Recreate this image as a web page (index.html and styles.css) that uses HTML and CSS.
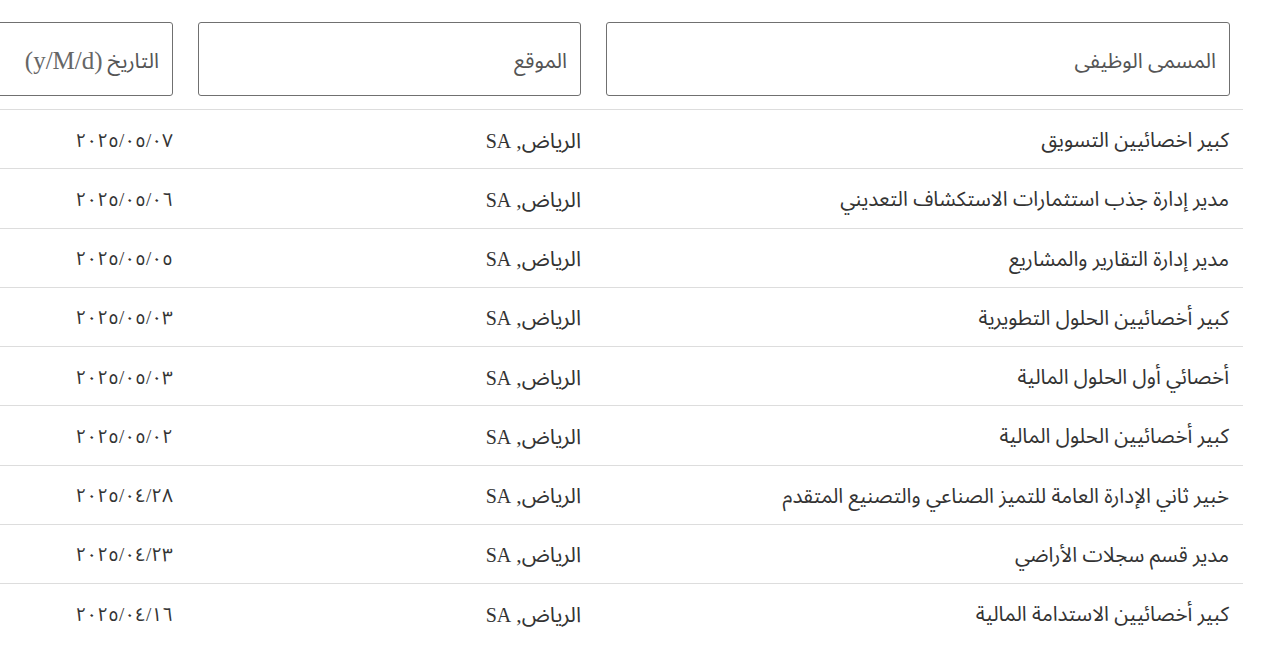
FILE: index.html
```html
<!DOCTYPE html>
<html lang="ar" dir="rtl">
<head>
<meta charset="utf-8">
<link rel="stylesheet" href="styles.css">
</head>
<body>
<div class="wrap">
<table class="jobs">
<colgroup>
<col class="w-title">
<col class="w-loc">
<col class="w-date">
</colgroup>
<thead>
<tr>
<th><div class="filter">المسمى الوظيفى</div></th>
<th><div class="filter">الموقع</div></th>
<th><div class="filter">التاريخ <span class="fmt">(y/M/d)</span></div></th>
</tr>
</thead>
<tbody>
<tr><td class="t">كبير اخصائيين التسويق</td><td class="l"><span class="city">الرياض,</span> SA</td><td class="d">٢٠٢٥/٠٥/٠٧</td></tr>
<tr><td class="t">مدير إدارة جذب استثمارات الاستكشاف التعديني</td><td class="l"><span class="city">الرياض,</span> SA</td><td class="d">٢٠٢٥/٠٥/٠٦</td></tr>
<tr><td class="t">مدير إدارة التقارير والمشاريع</td><td class="l"><span class="city">الرياض,</span> SA</td><td class="d">٢٠٢٥/٠٥/٠٥</td></tr>
<tr><td class="t">كبير أخصائيين الحلول التطويرية</td><td class="l"><span class="city">الرياض,</span> SA</td><td class="d">٢٠٢٥/٠٥/٠٣</td></tr>
<tr><td class="t">أخصائي أول الحلول المالية</td><td class="l"><span class="city">الرياض,</span> SA</td><td class="d">٢٠٢٥/٠٥/٠٣</td></tr>
<tr><td class="t">كبير أخصائيين الحلول المالية</td><td class="l"><span class="city">الرياض,</span> SA</td><td class="d">٢٠٢٥/٠٥/٠٢</td></tr>
<tr><td class="t">خبير ثاني الإدارة العامة للتميز الصناعي والتصنيع المتقدم</td><td class="l"><span class="city">الرياض,</span> SA</td><td class="d">٢٠٢٥/٠٤/٢٨</td></tr>
<tr><td class="t">مدير قسم سجلات الأراضي</td><td class="l"><span class="city">الرياض,</span> SA</td><td class="d">٢٠٢٥/٠٤/٢٣</td></tr>
<tr><td class="t">كبير أخصائيين الاستدامة المالية</td><td class="l"><span class="city">الرياض,</span> SA</td><td class="d">٢٠٢٥/٠٤/١٦</td></tr>
</tbody>
</table>
</div>
</body>
</html>
```
FILE: styles.css
```css
html, body {
  margin: 0;
  padding: 0;
  background: #fff;
}
body {
  overflow: hidden;
  height: 670px;
}
.wrap {
  padding-right: 24px;
  display: flex;
  justify-content: flex-start;
}
.jobs {
  border-collapse: collapse;
  table-layout: fixed;
  width: 1400px;
  flex: none;
  color: #333;
  font-size: 20px;
}
.w-title { width: 649px; }
.w-loc { width: 408px; }
.w-date { width: 343px; }
.jobs th {
  padding: 22px 13px 13px 12px;
  font-weight: normal;
  text-align: right;
  border-bottom: 1px solid #ddd;
}
.jobs tbody tr {
  height: 59.25px;
}
.jobs td {
  padding: 3px 13px 0 13px;
  border-bottom: 1px solid #ddd;
  text-align: right;
  vertical-align: middle;
  white-space: nowrap;
}
.jobs td.t {
  padding-right: 14px;
  font-size: 20.5px;
}
.jobs td.d {
  font-size: 19px;
}
.jobs tbody tr:last-child td {
  border-bottom: none;
}
.filter {
  height: 74px;
  box-sizing: border-box;
  border: 1px solid #707070;
  border-radius: 3px;
  padding: 3px 13px 0;
  display: flex;
  align-items: center;
  gap: 5px;
  color: #555;
  font-family: "Liberation Serif", "Noto Sans Arabic", "DejaVu Sans", serif;
  font-size: 21px;
}
.fmt {
  font-size: 25px;
  color: #666;
}
.city {
  font-size: 21.5px;
}
.t {
  font-family: "Noto Sans Arabic", "Noto Sans", "DejaVu Sans", sans-serif;
}
.l, .d {
  font-family: "Liberation Serif", "Noto Sans Arabic", "DejaVu Sans", serif;
}
```
